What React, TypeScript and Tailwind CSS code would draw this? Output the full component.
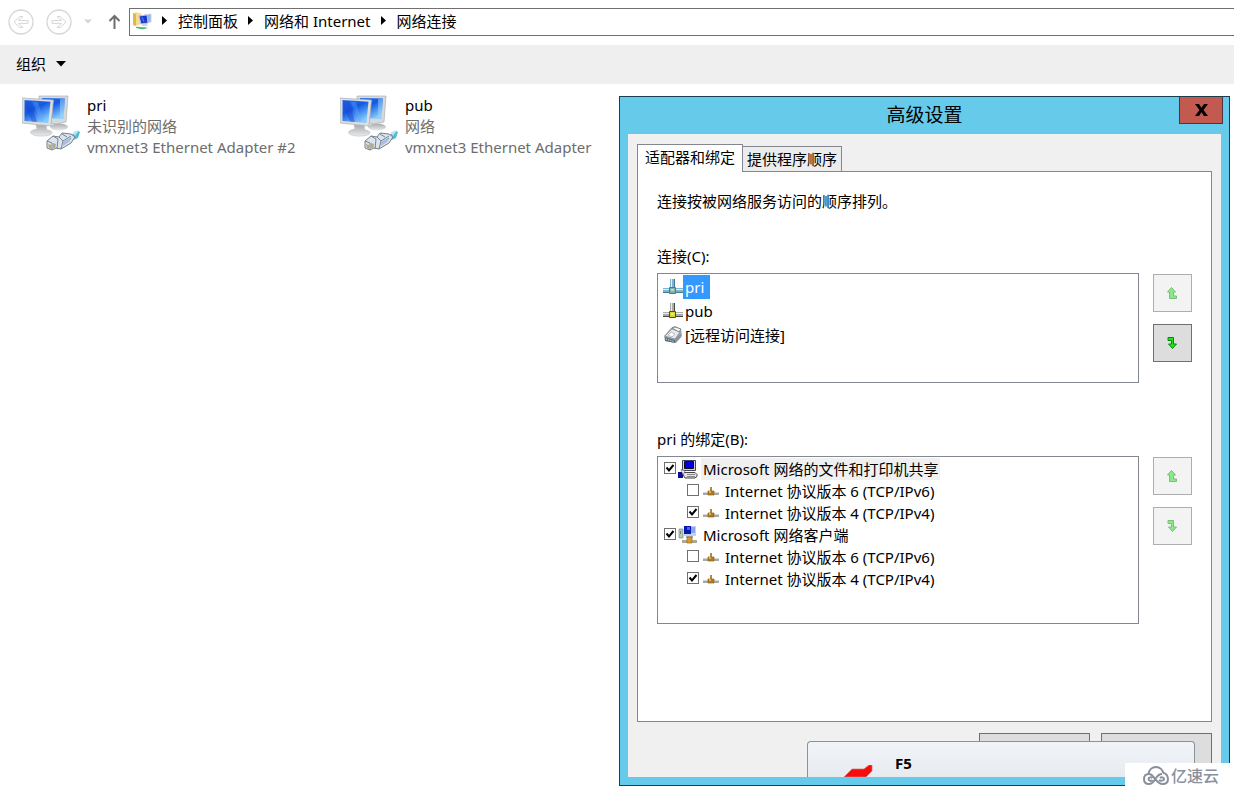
import { useState } from 'react';
import type { ReactNode } from 'react';
import { clsx } from 'clsx';

const crumbs = ['控制面板', '网络和 Internet', '网络连接'];

const adapters = [
  { name: 'pri', status: '未识别的网络', device: 'vmxnet3 Ethernet Adapter #2' },
  { name: 'pub', status: '网络', device: 'vmxnet3 Ethernet Adapter' },
];

const bindings = [
  { id: 'share', label: 'Microsoft 网络的文件和打印机共享', icon: 'share', checked: true },
  { id: 'share-v6', label: 'Internet 协议版本 6 (TCP/IPv6)', icon: 'protocol', checked: false },
  { id: 'share-v4', label: 'Internet 协议版本 4 (TCP/IPv4)', icon: 'protocol', checked: true },
  { id: 'client', label: 'Microsoft 网络客户端', icon: 'client', checked: true },
  { id: 'client-v6', label: 'Internet 协议版本 6 (TCP/IPv6)', icon: 'protocol', checked: false },
  { id: 'client-v4', label: 'Internet 协议版本 4 (TCP/IPv4)', icon: 'protocol', checked: true },
];

function RoundArrow({ label, flip = false }: { label: string; flip?: boolean }) {
  return (
    <button aria-label={label} className="shrink-0">
      <svg width="26" height="26" viewBox="0 0 26 26" fill="none" stroke="#d6d6d6" className={clsx('block', flip && 'rotate-180')}>
        <circle cx="13" cy="13" r="12" strokeWidth="1.3" />
        <path d="M6 13l6-5.5h3L10.500 11.600H20v2.800h-9.500L15 18.500h-3z" />
      </svg>
    </button>
  );
}

function CrumbArrow() {
  return (
    <svg width="5" height="9" viewBox="0 0 5 9" className="shrink-0">
      <path d="M0 0l5 4.500L0 9z" fill="#000" />
    </svg>
  );
}

function FolderIcon() {
  return (
    <svg width="20" height="20" viewBox="0 0 20 20" className="shrink-0">
      <path d="M1 2l4-1 1 1h3v11l-6 2-2-1z" fill="#f3dc8b" />
      <path d="M1 2l3 1v12l-3-1z" fill="#dfb94f" />
      <path d="M12 4l7-1v8l-6 1z" fill="#8db8ee" stroke="#c9d3df" />
      <path d="M7 5l8-1 1 8-7 1z" fill="#1b35cf" stroke="#b4c4e3" />
      <path d="M10 6l2 5" stroke="#4a70ea" strokeWidth="1.500" />
      <path d="M10 13l5 0 1 2h-6z" fill="#cfd6dc" />
      <path d="M4 16c3-1 5 1 8 0l4 1-4 1c-3 1-5-1-8-1z" fill="#4dbb70" />
    </svg>
  );
}

function AdapterIcon() {
  return (
    <svg width="58" height="58" viewBox="0 0 58 58" className="shrink-0">
      <defs>
        <linearGradient id="screen" x1="0" y1="0" x2="0.600" y2="1">
          <stop offset="0" stopColor="#2a70ea" />
          <stop offset="0.45" stopColor="#1259e2" />
          <stop offset="1" stopColor="#86ccff" />
        </linearGradient>
        <linearGradient id="stand" x1="0" y1="0" x2="0" y2="1">
          <stop offset="0" stopColor="#a9acaf" />
          <stop offset="1" stopColor="#e9eaeb" />
        </linearGradient>
      </defs>
      <ellipse cx="37" cy="32" rx="9" ry="3.500" fill="url(#stand)" />
      <path d="M17 1h29l-2 26-10 2-16-3z" fill="#d6d9db" stroke="#aeb2b5" strokeWidth="0.700" />
      <path d="M20 3l23 .500-1.500 20.500-20-1z" fill="url(#screen)" />
      <path d="M38 4l5-.300-1.500 20-3.500-.300z" fill="#a4d6fc" opacity="0.500" />
      <path d="M14 30h10l1 5c6 .500 7 4 1 5.500-5 1-14 1-17-2-2-2 2-4 6-4.500z" fill="url(#stand)" stroke="#bfc2c5" strokeWidth="0.600" />
      <path d="M0 3l31.500 2-2.500 26-29-3z" fill="#dcdee0" stroke="#aaaeb1" strokeWidth="0.700" />
      <path d="M2.500 5l26 1.700-2.200 21.300L2.500 26z" fill="url(#screen)" />
      <path d="M9 6l6 21-5-.500L3 12V6z" fill="#1a43c9" opacity="0.450" />
      <path d="M16 7l6 20-4-.400L11 7z" fill="#67a8fa" opacity="0.350" />
      <path d="M44 43l12-7 2 1-2 6-9 4z" fill="#58b9d7" />
      <path d="M51 37l6-2-4 6z" fill="#b9e6f1" />
      <path d="M25 46l6-5 6 1 3-4 9 1 4 3-4 6-10 6-5-1-4 2-5-2z" fill="#dde3ea" stroke="#76828f" />
      <path d="M31 41l5 3-1 10M37 42l4 4 8-5M41 46l-2 8M40 39l5 3M45 48l4-5M25 46l5 2v7" fill="none" stroke="#75869b" />
      <path d="M26 49l3 1v4l-2-1zM31 48l3 1-1 5-2-1z" fill="#b3ad7c" />
      <path d="M41 47l8-5-2 5-6 4z" fill="#a8bfdf" />
    </svg>
  );
}

type PipeProps = { pipe: string; edge: string; joint: string };

function PipeIcon({ pipe, edge, joint }: PipeProps) {
  return (
    <svg width="20" height="16" viewBox="0 0 20 16" className="shrink-0">
      <path d="M7 0h5v9H7z" fill={pipe} />
      <path d="M11.500 0v8" stroke={edge} />
      <path d="M8.500 0v8" stroke="#e6eef2" />
      <path d="M0 9h20v5H0z" fill={pipe} />
      <path d="M0 10.500h20" stroke="#e6eef2" />
      <path d="M0 13.500h20" stroke={edge} />
      <path d="M6.500 8.500h6v6h-6z" fill={joint} stroke={edge} />
      <path d="M8 10h3v2H8z" fill="#fff" opacity="0.450" />
    </svg>
  );
}

function ModemIcon() {
  return (
    <svg width="20" height="18" viewBox="0 0 20 18" className="shrink-0">
      <path d="M1 10l7-8 4-2 6 3 1 7-6 7-11-2z" fill="#9da5ac" />
      <path d="M2 10l7-7 8 3-5 7z" fill="#e8ebed" stroke="#858c93" strokeWidth="0.700" />
      <path d="M9 2l3-1 6 2-2 3z" fill="#f5f6f7" stroke="#6f777e" strokeWidth="0.800" />
      <path d="M5 9l3-3 4 2-3 3z" fill="#fff" stroke="#9aa2a9" strokeWidth="0.700" />
      <path d="M2 11l10 3v3L2 15z" fill="#5f7487" />
      <path d="M3 13l8 2.500" stroke="#bce0df" strokeDasharray="1 1" />
      <path d="M12 13l6-6v4l-6 6z" fill="#8b949b" />
    </svg>
  );
}

function ShareIcon() {
  return (
    <svg width="20" height="20" viewBox="0 0 20 20" className="shrink-0">
      <path d="M4.500 1.500h13v10h-13z" fill="#d7d7d0" stroke="#44445a" />
      <path d="M6.500 2.500h9v7h-9z" fill="#0000e6" stroke="#111" />
      <path d="M4 13.500h13l2 2v2l-2 1.500H7z" fill="#e6e4dc" stroke="#444" />
      <path d="M9 15.500h8M9 17.500h8" stroke="#8a8a8a" />
      <path d="M0 13h5v6H0z" fill="#0a0a93" />
      <path d="M3 10.500l4 1.500-2 4z" fill="#fff" stroke="#555" strokeWidth="0.600" />
    </svg>
  );
}

function ClientIcon() {
  return (
    <svg width="20" height="20" viewBox="0 0 20 20" className="shrink-0">
      <path d="M1 4h4v9H1z" fill="#b9c8ba" stroke="#7d8b80" strokeWidth="0.700" />
      <path d="M2 6h1v3H2z" fill="#52a04e" />
      <path d="M6 1h12v10H6z" fill="#c5d2ef" />
      <path d="M6 1h7v8H6z" fill="#0717b5" />
      <path d="M13 2h4v6h-4z" fill="#8da4ea" />
      <path d="M9 2h3v3H9z" fill="#4468e8" />
      <path d="M8 11h7v2H8z" fill="#aab0b5" />
      <path d="M4 15h15v3H4z" fill="#aba79a" />
      <path d="M9 12h5v6H9z" fill="#d69a2d" stroke="#9c6c19" strokeWidth="0.700" />
    </svg>
  );
}

function ProtocolIcon() {
  return (
    <svg width="16" height="10" viewBox="0 0 16 10" className="shrink-0">
      <path d="M0 6h16v3H0z" fill="#a9a9a9" />
      <path d="M0 6.500h16" stroke="#d5d5d5" />
      <path d="M7 1h2v4H7z" fill="#b98a30" />
      <path d="M5 5h6v4H5z" fill="#b07c22" stroke="#8c641c" strokeWidth="0.700" />
      <path d="M6 5h2v2H6z" fill="#dcb268" />
    </svg>
  );
}

function MoveButton({ down = false, disabled = false }: { down?: boolean; disabled?: boolean }) {
  return (
    <button
      aria-label={down ? '下移' : '上移'}
      disabled={disabled}
      className={clsx(
        'flex h-[38px] w-full items-center justify-center border pr-0.5',
        disabled ? 'border-[#aeaeae] bg-[#f3f3f3]' : 'border-[#707070] bg-[#dddddd]'
      )}
    >
      <svg width="10" height="13" viewBox="0 0 10 13" className={clsx(disabled && 'opacity-50')}>
        {down ? (
          <path d="M1 .500h5.500v6.500H9.500L5.500 11.500 1.500 7h3V3.500H1z" fill="#22e022" stroke="#078a07" />
        ) : (
          <path d="M4.500 .500L8.500 5H6.500v4h3v2.500H2.500V5H.500z" fill="#22e022" stroke="#078a07" />
        )}
      </svg>
    </button>
  );
}

function Section({ title, children }: { title: string; children: ReactNode }) {
  return (
    <section aria-label={title}>
      <h2>{title}</h2>
      <div className="mt-[7px] grid grid-cols-[1fr_39px] gap-x-3.5">{children}</div>
    </section>
  );
}

function BindingIcon({ icon }: { icon: string }) {
  if (icon === 'share') return <ShareIcon />;
  if (icon === 'client') return <ClientIcon />;
  return <ProtocolIcon />;
}

function AdvancedSettings() {
  const [tab, setTab] = useState(0);
  const [connection, setConnection] = useState('pri');

  const connections = [
    { name: 'pri', icon: <PipeIcon pipe="#7fb3d0" edge="#4a7894" joint="#7eb3a9" /> },
    { name: 'pub', icon: <PipeIcon pipe="#a9adaa" edge="#4a4a3c" joint="#d6d62c" /> },
    { name: '[远程访问连接]', icon: <ModemIcon /> },
  ];

  return (
    <div role="dialog" aria-labelledby="dialog-title" className="absolute right-1 top-24 w-[611px] border border-[#1c3d4b] bg-[#66caea]">
      <header className="grid h-[37px] grid-cols-[1fr_auto_1fr] px-1.5">
        <h1 id="dialog-title" className="col-start-2 pt-1.5 text-[19px] leading-6">高级设置</h1>
        <button aria-label="关闭" className="flex h-[27px] w-11 items-center justify-center justify-self-end border border-t-0 border-[#4d3540] bg-[#c35a50]">
          <svg width="13" height="12" viewBox="0 0 13 12">
            <path d="M0 0h4l2.500 3.800L9 0h4L8.500 6l4.500 6H9L6.500 8.200 4 12H0l4.500-6z" fill="#000" />
          </svg>
        </button>
      </header>

      <div className="relative mx-2 mb-2 h-[643px] overflow-hidden bg-[#f0f0f0] px-[9px] pt-2.5">
        <div role="tablist" className="relative z-10 -mb-px flex items-end">
          {['适配器和绑定', '提供程序顺序'].map((name, index) => (
            <button
              key={name}
              role="tab"
              aria-selected={tab === index}
              onClick={() => setTab(index)}
              className={clsx(
                'border border-[#828790]',
                index > 0 && 'border-l-0',
                tab === index ? 'h-7 border-b-0 bg-white px-[7px] pb-1' : 'h-[26px] bg-[#ececec] px-1'
              )}
            >
              {name}
            </button>
          ))}
        </div>

        <div role="tabpanel" className="h-[551px] border border-[#828790] bg-white px-[19px] pt-[19px]">
          <p className="mb-[35px]">连接按被网络服务访问的顺序排列。</p>

          <Section title="连接(C):">
            <ul role="listbox" aria-label="连接" className="h-[110px] border border-[#828790] py-px pl-[5px]">
              {connections.map((item) => (
                <li
                  key={item.name}
                  role="option"
                  aria-selected={connection === item.name}
                  onClick={() => setConnection(item.name)}
                  className="flex h-6 items-center"
                >
                  {item.icon}
                  <span className={clsx('pl-0.5 pr-1.5 leading-6', connection === item.name && 'bg-[#3399ff] text-white')}>
                    {item.name}
                  </span>
                </li>
              ))}
            </ul>
            <div className="space-y-3 pt-px">
              <MoveButton disabled />
              <MoveButton down />
            </div>
          </Section>

          <div className="h-[46px]" />

          <Section title="pri 的绑定(B):">
            <ul className="h-[168px] border border-[#828790] py-px pl-1.5">
              {bindings.map((item, index) => (
                <li key={item.id} className={clsx('flex h-[22px] items-center', item.icon === 'protocol' && 'pl-[23px]')}>
                  <span className="grid shrink-0 pb-0.5">
                    <input
                      id={item.id}
                      type="checkbox"
                      defaultChecked={item.checked}
                      className="peer col-start-1 row-start-1 size-3 appearance-none border border-[#707070] bg-white"
                    />
                    <svg
                      width="12"
                      height="12"
                      viewBox="0 0 12 12"
                      className="pointer-events-none invisible col-start-1 row-start-1 peer-checked:visible"
                    >
                      <path d="M2.500 5.500l2.500 3 4.500-5.500" fill="none" stroke="#000" strokeWidth="2" />
                    </svg>
                  </span>
                  <label htmlFor={item.id} className={clsx('flex items-center', item.icon === 'protocol' ? 'gap-1 pl-1' : 'gap-[3px] pl-0.5')}>
                    <BindingIcon icon={item.icon} />
                    <span className={clsx('px-0.5 leading-[22px]', index === 0 && 'bg-[#f0f0f0]')}>{item.label}</span>
                  </label>
                </li>
              ))}
            </ul>
            <div className="space-y-3 pt-px">
              <MoveButton disabled />
              <MoveButton down disabled />
            </div>
          </Section>
        </div>

        <div className="mt-[11px] flex justify-end gap-[11px]">
          <button aria-label="确定" className="h-11 w-[111px] border border-[#707070] bg-[#dddddd]" />
          <button aria-label="取消" className="h-11 w-[111px] border border-[#707070] bg-[#dddddd]" />
        </div>

        <div className="absolute bottom-0 right-[26px] flex h-9 w-[388px] items-end rounded-t border border-b-0 border-[#8c9299] bg-linear-to-b from-[#f1f4f7] to-[#e7ebf0] pl-9">
          <svg width="29" height="12" viewBox="0 0 29 12">
            <path d="M0 12L8 4h12l5-4h3v6l-6 6z" fill="#f80b0b" stroke="#c9767a" strokeWidth="0.700" />
          </svg>
          <kbd className="self-center pl-[22px] pt-1.5 font-['Noto_Sans','Noto_Sans_CJK_SC',sans-serif] text-[15px] font-bold">F5</kbd>
        </div>
      </div>
    </div>
  );
}

export default function App() {
  return (
    <div className="relative min-h-screen overflow-hidden bg-white font-['Noto_Sans','Noto_Sans_CJK_SC',sans-serif] text-[15px] leading-5 text-black">
      {/* Address bar */}
      <nav className="mb-0.5 flex h-[43px] items-center pl-2">
        <div className="flex gap-3">
          <RoundArrow label="后退" />
          <RoundArrow label="前进" flip />
        </div>
        <button aria-label="最近浏览的位置" className="pl-3">
          <svg width="8" height="5" viewBox="0 0 8 5">
            <path d="M0 .500h8L4 4.500z" fill="#d4d4d4" />
          </svg>
        </button>
        <button aria-label="上移" className="pl-4 pr-2">
          <svg width="13" height="15" viewBox="0 0 13 15" fill="none" stroke="#6e6e6e" strokeWidth="2">
            <path d="M6.500 15V2M1.500 7l5-5 5 5" />
          </svg>
        </button>
        <div className="flex h-7 flex-1 items-center border border-r-0 border-[#707070] pb-0.5 pl-0.5">
          <FolderIcon />
          <ol className="flex items-center">
            {crumbs.map((crumb) => (
              <li key={crumb} className="flex items-center gap-[11px] pl-2.5">
                <CrumbArrow />
                <a href="#" className="whitespace-nowrap">{crumb}</a>
              </li>
            ))}
          </ol>
        </div>
      </nav>

      {/* Toolbar */}
      <div className="flex h-[39px] items-center bg-[#efefef] pb-0.5 pl-4">
        <button className="flex items-center gap-2.5">
          组织
          <svg width="10" height="6" viewBox="0 0 10 6">
            <path d="M0 0h10L5 5.500z" fill="#000" />
          </svg>
        </button>
      </div>

      <main className="flex pl-[22px] pt-[11px]">
        {adapters.map((adapter) => (
          <article key={adapter.name} className="flex w-[318px] gap-[7px] leading-[21px]">
            <AdapterIcon />
            <div className="whitespace-nowrap text-[#6d6d6d]">
              <h2 className="text-black">{adapter.name}</h2>
              <p>{adapter.status}</p>
              <p>{adapter.device}</p>
            </div>
          </article>
        ))}
      </main>

      <AdvancedSettings />

      <footer className="absolute bottom-0 right-0 flex h-[25px] w-[109px] items-center gap-0.5 bg-white pl-[18px] text-[#8a8f9c]">
        <svg width="26" height="20" viewBox="0 0 26 20" fill="none" stroke="#8a8f9c" strokeWidth="2">
          <path d="M5.500 8C6 4 9 1 13 1s7 3 7 6" />
          <path d="M20 7c3 0 5 3 5 6s-2 5-5.500 5c-3.500 0-5-2-7-4.500S9 8 6 8s-5 2-5 5 2 5 5 5c4 0 5-3 7-6s4-4 6-4" />
          <path d="M16 14c1 1 5 1 5-1s-3-2-4-1M9.500 14c-1 1.500-4 1-4-1s3-2 4-1" />
        </svg>
        <span className="text-[16px] font-medium">亿速云</span>
      </footer>
    </div>
  );
}
